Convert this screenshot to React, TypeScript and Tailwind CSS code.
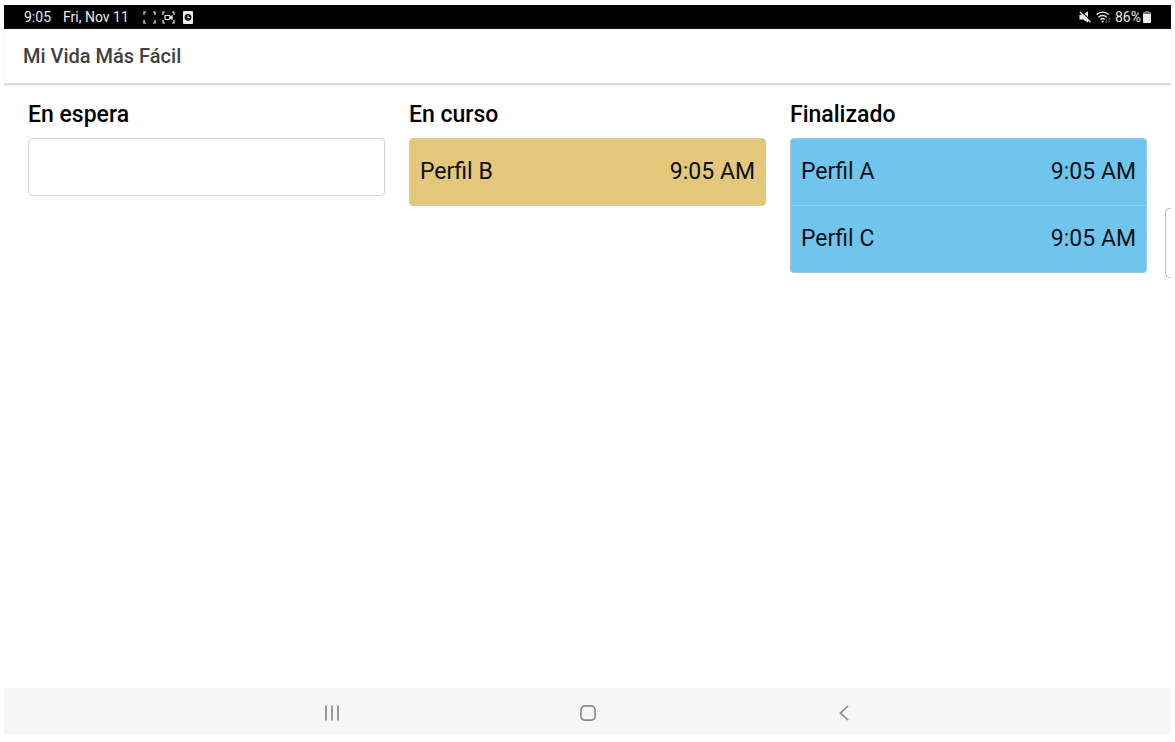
type Profile = { name: string; time: string };

type Column = { title: string; color: string; items: Profile[] };

const columns: Column[] = [
  { title: "En espera", color: "bg-white border-[#d4d4d4]", items: [] },
  {
    title: "En curso",
    color: "bg-[#e4c77a] border-[#d6cba6]",
    items: [{ name: "Perfil B", time: "9:05 AM" }],
  },
  {
    title: "Finalizado",
    color: "bg-[#6fc5ed] border-[#93c9e2]",
    items: [
      { name: "Perfil A", time: "9:05 AM" },
      { name: "Perfil C", time: "9:05 AM" },
    ],
  },
];

function StatusBar() {
  return (
    <div className="flex h-6 items-center justify-between bg-black px-5 text-sm text-[#ececec]">
      <div className="flex items-center">
        <span>9:05</span>
        <span className="ml-3">Fri, Nov 11</span>
        <svg className="ml-[14px] h-[13px] w-[13px]" viewBox="0 0 13 13" fill="none" stroke="currentColor" strokeWidth="1.2">
          <path d="M1 4V1h2M10 1h2v3M12 9v3h-2M3 12H1V9" />
        </svg>
        <svg className="ml-[6px] h-[13px] w-[13px]" viewBox="0 0 13 13" fill="none" stroke="currentColor" strokeWidth="1.2">
          <path d="M1 4V1h2M10 1h2v3M12 9v3h-2M3 12H1V9" />
          <rect x="3" y="4.5" width="5" height="4" rx="0.5" />
          <path d="M8 6.5l2-1.5v3z" fill="currentColor" />
        </svg>
        <svg className="ml-[8px] h-[13px] w-[10px]" viewBox="0 0 10 13">
          <rect width="10" height="13" rx="1" fill="#ececec" />
          <circle cx="5" cy="6.3" r="3.4" fill="#111" />
          <path d="M5 4.3v2.2h1.8" fill="none" stroke="#ececec" strokeWidth="1.1" />
        </svg>
      </div>
      <div className="flex items-center">
        <svg className="h-3 w-3" viewBox="0 0 12 12">
          <path d="M0.5 3.8H4L9 0.3V11.6L4 8.4H0.5z" fill="currentColor" />
          <path d="M2 0.5L12 9.7" stroke="#000" strokeWidth="1.3" />
          <path d="M0.8 0.8l10.7 10.4" stroke="currentColor" strokeWidth="1.3" />
        </svg>
        <svg className="ml-[5px] h-3 w-[15px]" viewBox="0 0 15 12" fill="none" stroke="currentColor" strokeWidth="1.4">
          <path d="M0.6 3.6a8.6 8.6 0 0 1 12 0M2.5 6.2a5.8 5.8 0 0 1 8.2 0M4.5 8.5a3 3 0 0 1 4.2 0" />
          <circle cx="6.6" cy="10.6" r="1" fill="currentColor" stroke="none" />
          <path d="M10.3 7.5v4M9.2 10.4l1.1 1.1 1.1-1.1M13.2 11.5v-4M12.1 8.6l1.1-1.1 1.1 1.1" stroke="#777" strokeWidth="0.8" />
        </svg>
        <span className="ml-1">86%</span>
        <svg className="ml-[2px] h-3 w-2" viewBox="0 0 8 12">
          <path d="M2.5 0h3v1H7a1 1 0 0 1 1 1v9a1 1 0 0 1-1 1H1a1 1 0 0 1-1-1V2a1 1 0 0 1 1-1h1.5z" fill="#777" />
          <path d="M0 3h8v8a1 1 0 0 1-1 1H1a1 1 0 0 1-1-1z" fill="#f0f0f0" />
        </svg>
      </div>
    </div>
  );
}

function BoardColumn({ column }: { column: Column }) {
  return (
    <section>
      <h2 className="mb-[7px] text-[23px] leading-8 font-medium text-black">{column.title}</h2>
      <ul className={`min-h-[58px] overflow-hidden rounded border ${column.color}`}>
        {column.items.map((item) => (
          <li
            key={item.name}
            className="flex justify-between border-b border-[#8fd0f0] px-[10px] py-[17px] text-[23px] leading-8 text-[#0a1014] last:border-b-0"
          >
            <span>{item.name}</span>
            <span>{item.time}</span>
          </li>
        ))}
      </ul>
    </section>
  );
}

function NavBar() {
  return (
    <nav className="flex h-[47px] justify-center bg-[#f6f6f6] pt-[2px] text-[#8a8a8a]">
      <button type="button" aria-label="Recientes" className="flex w-64 items-center justify-center">
        <svg className="h-4 w-4" viewBox="0 0 16 16" stroke="currentColor" strokeWidth="1.7">
          <path d="M2 0.5v15M8 0.5v15M14 0.5v15" />
        </svg>
      </button>
      <button type="button" aria-label="Inicio" className="flex w-64 items-center justify-center">
        <svg className="h-4 w-4" viewBox="0 0 16 16" fill="none" stroke="currentColor" strokeWidth="1.7">
          <rect x="0.9" y="0.9" width="14.2" height="14.2" rx="4" />
        </svg>
      </button>
      <button type="button" aria-label="Atrás" className="flex w-64 items-center justify-center">
        <svg className="h-4 w-4" viewBox="0 0 16 16" fill="none" stroke="currentColor" strokeWidth="1.7">
          <path d="M12 1L4.5 8l7.5 7" />
        </svg>
      </button>
    </nav>
  );
}

export default function App() {
  return (
    <div className="flex min-h-screen flex-col bg-white px-1 pt-[5px] pb-[7px] font-['Roboto',sans-serif]">
      <div className="relative flex flex-1 flex-col">
        <StatusBar />
        <header className="border-b-2 border-[#dcdcdc] px-[19px] py-[13px] shadow-[0_1px_2px_#eeeeee]">
          <h1 className="text-xl leading-7 font-medium text-[#424242]">Mi Vida Más Fácil</h1>
        </header>
        <main className="grid flex-1 grid-cols-3 content-start gap-6 px-6 pt-[14px]">
          {columns.map((column) => (
            <BoardColumn key={column.title} column={column} />
          ))}
        </main>
        <NavBar />
        {/* edge panel handle */}
        <div className="absolute top-[203px] right-0 h-[70px] w-[6px] rounded-l-[5px] border border-r-0 border-[#bcbcbc] bg-white" />
      </div>
    </div>
  );
}
